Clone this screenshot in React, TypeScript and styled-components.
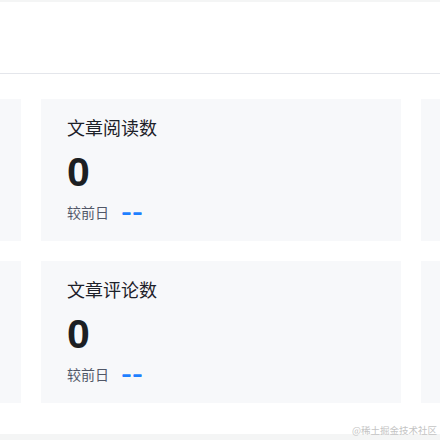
import * as React from "react";
import styled, { createGlobalStyle } from "styled-components";

const GlobalStyle = createGlobalStyle`
  html, body {
    margin: 0;
    padding: 0;
    background: #f4f5f5;
  }
  body {
    font-family: "Liberation Sans", "Noto Sans CJK SC", sans-serif;
  }
`;

const Page = styled.div`
  width: 440px;
  height: 440px;
  overflow: hidden;
  position: relative;
  padding-top: 2px;
  box-sizing: border-box;
`;

const Header = styled.div`
  height: 71px;
  background: #ffffff;
  border-bottom: 1px solid #e4e6eb;
`;

const Content = styled.div`
  height: 360px;
  background: #ffffff;
  padding: 25px 0 0 2px;
  box-sizing: border-box;
  overflow: hidden;
`;

const Grid = styled.div`
  display: grid;
  grid-template-columns: repeat(3, 360px);
  grid-auto-rows: 142px;
  justify-content: center;
  gap: 20px;
`;

const Card = styled.div`
  background: #f7f8fa;
  padding: 16px 26px 0;
  box-sizing: border-box;
  display: flex;
  flex-direction: column;
`;

const Title = styled.div`
  font-family: "Noto Sans CJK SC", sans-serif;
  font-size: 18px;
  line-height: 24px;
  color: #1d2129;
`;

const Count = styled.div`
  font-family: "Liberation Sans", Arial, sans-serif;
  font-weight: 700;
  font-size: 41px;
  line-height: 48px;
  margin-top: 9px;
  color: #1c1f23;
`;

const Compare = styled.div`
  display: flex;
  align-items: baseline;
  margin-top: 5px;
  font-family: "Noto Sans CJK SC", sans-serif;
  font-size: 14px;
  line-height: 22px;
  color: #515767;
`;

const Trend = styled.span<{ $up?: boolean }>`
  margin-left: 13px;
  font-family: "Liberation Sans", sans-serif;
  font-weight: 700;
  font-size: 16px;
  letter-spacing: 2px;
  color: ${(p) => (p.$up ? "#f53f3f" : "#1e80ff")};
  text-shadow: 0 0.8px 0 currentColor;
`;

const Watermark = styled.div`
  position: absolute;
  right: 3px;
  bottom: 4px;
  font-family: "Noto Sans CJK SC", sans-serif;
  font-size: 9.5px;
  line-height: 12px;
  color: #c4c4c4;
`;

interface Stat {
  title: string;
  value: number;
}

// only the middle column is in view; the side columns show as bare card edges
const stats: (Stat | null)[] = [
  null,
  { title: "文章阅读数", value: 0 },
  null,
  null,
  { title: "文章评论数", value: 0 },
  null,
];

const StatCard: React.FunctionComponent<{ stat: Stat | null }> = ({ stat }) => (
  <Card>
    {stat ? (
      <>
        <Title>{stat.title}</Title>
        <Count>{stat.value}</Count>
        <Compare>
          较前日
          <Trend>––</Trend>
        </Compare>
      </>
    ) : undefined}
  </Card>
);

export default function App() {
  return (
    <>
      <GlobalStyle />
      <Page>
        <Header />
        <Content>
          <Grid>
            {stats.map((s, i) => (
              <StatCard key={i} stat={s} />
            ))}
          </Grid>
        </Content>
        <Watermark>@稀土掘金技术社区</Watermark>
      </Page>
    </>
  );
}
